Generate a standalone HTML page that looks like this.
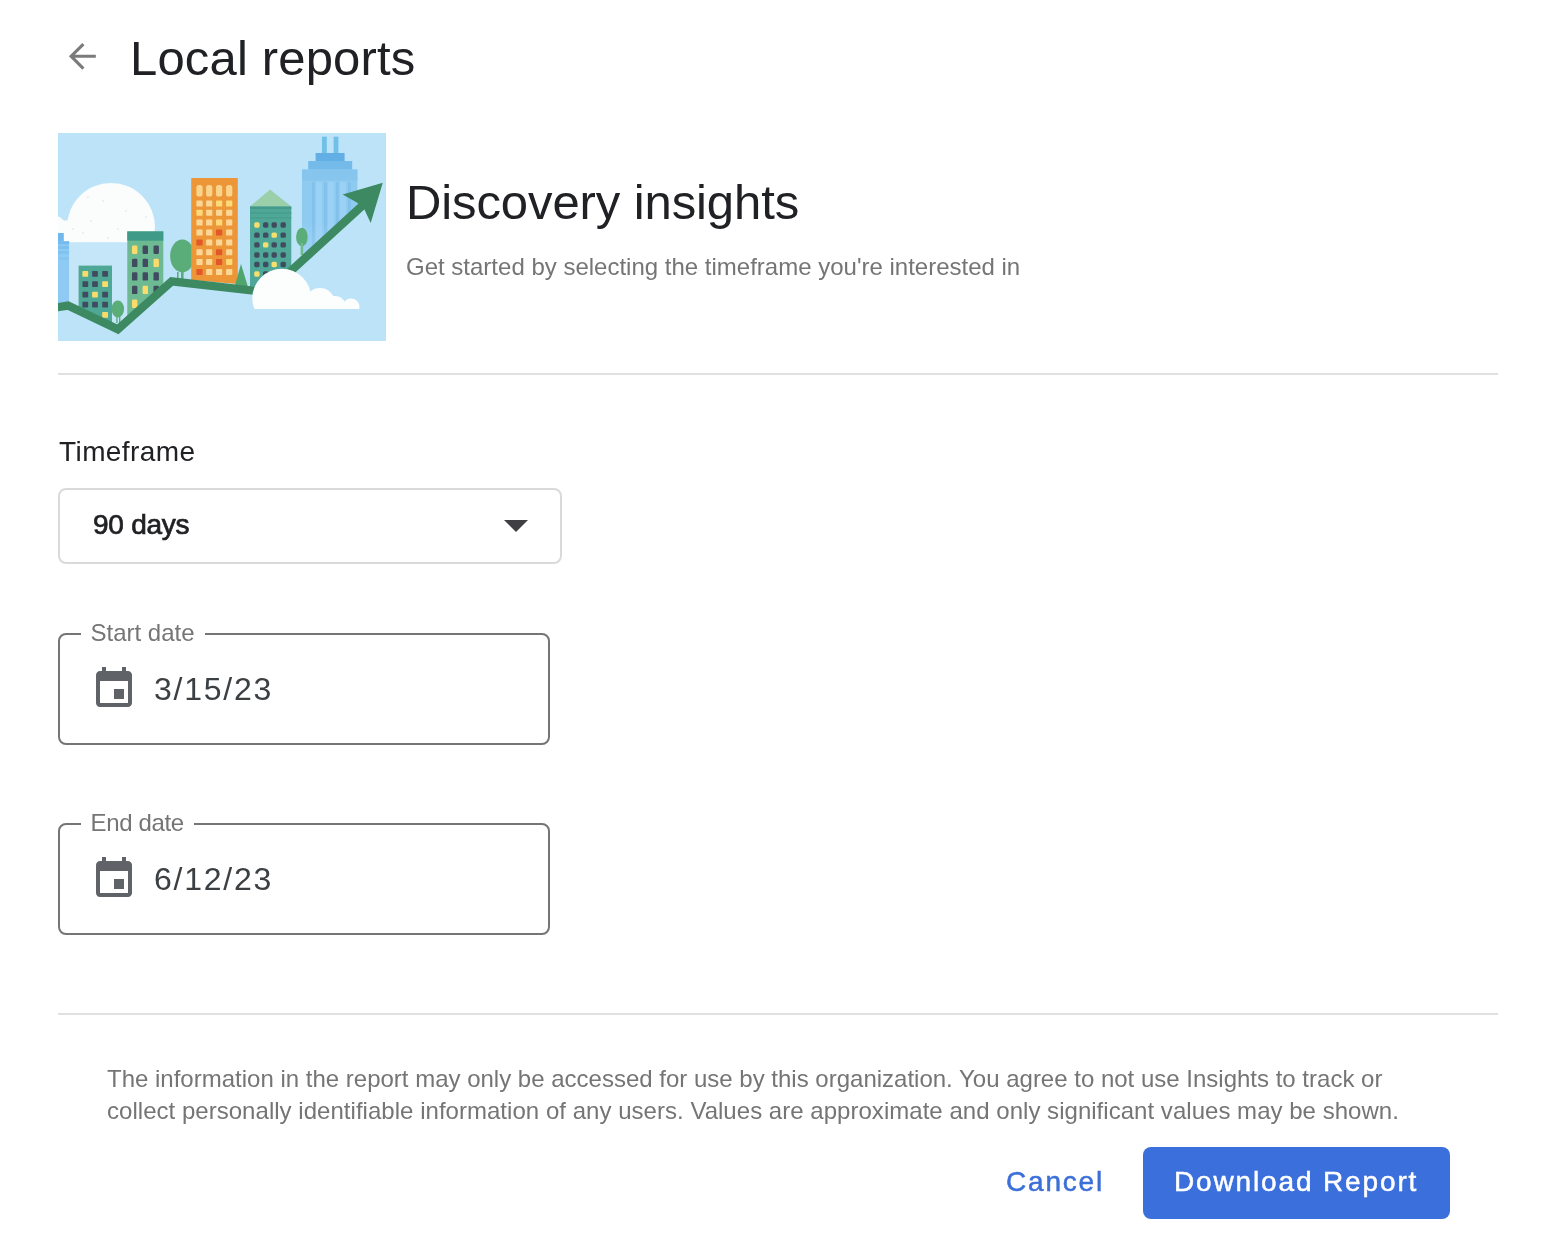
<!DOCTYPE html>
<html lang="en">
<head>
<meta charset="utf-8">
<title>Local reports</title>
<style>
*{box-sizing:border-box;margin:0;padding:0}
html,body{width:1550px;height:1256px;background:#fff;overflow:hidden}
body{position:relative;font-family:"Liberation Sans",sans-serif;color:#202124}
.abs{position:absolute;white-space:nowrap;line-height:1;will-change:transform}
#back{left:61.8px;top:35.6px;width:40.6px;height:40.6px}
#title{left:130px;top:34.4px;font-size:49px;letter-spacing:0.17px;color:#202124}
#hero{left:58px;top:133px;width:328px;height:208px}
#h2{left:406px;top:178.2px;font-size:49px;letter-spacing:-0.1px;color:#202124}
#sub{left:406px;top:255px;font-size:24px;color:#757575}
.hr{position:absolute;left:58px;width:1440px;height:2px;background:#e0e0e0}
#hr1{top:373px}
#hr2{top:1013px}
#tf{left:58.5px;top:438px;font-size:28px;letter-spacing:0.42px;color:#202124}
#sel{left:58px;top:488px;width:504px;height:76px;border:2px solid #dadada;border-radius:8px}
#selt{left:92.8px;top:511px;font-size:28px;letter-spacing:-0.25px;color:#202124;-webkit-text-stroke:0.7px #202124}
#caret{left:504px;top:520px;width:0;height:0;border-left:12px solid transparent;border-right:12px solid transparent;border-top:12px solid #404044}
.box{position:absolute;left:58px;width:492px;height:112px;border:2px solid #757575;border-radius:8px}
#b1{top:633px}
#b2{top:823px}
.lbl{background:#fff;padding:0 10px 0 9.5px;font-size:24px;color:#757575}
#l1{left:81px;top:621px}
#l2{left:81px;top:811px;letter-spacing:-0.35px}
.cal{position:absolute;left:90px;width:48px;height:48px}
#c1{top:665px}
#c2{top:855px}
.dt{font-size:32px;color:#3c4043;left:154px;letter-spacing:1.75px}
#d1{top:673px}
#d2{top:863px}
.note{left:107px;font-size:24px;color:#757575}
#n1{top:1067px}
#n2{top:1099px;letter-spacing:0.03px}
#cancel{left:1006px;top:1168px;font-size:28px;letter-spacing:1.8px;color:#3b6fd8;-webkit-text-stroke:0.5px #3b6fd8}
#btn{left:1143px;top:1147px;width:307px;height:72px;background:#3b6fdc;border-radius:8px}
#btnt{left:1174px;top:1168px;font-size:28px;letter-spacing:1.86px;color:#fff;-webkit-text-stroke:0.5px #fff}
</style>
</head>
<body>
<svg id="back" class="abs" viewBox="0 0 24 24"><path fill="#7b7b7b" d="M20 11.1H7.6l5.7-5.7L12 4.1 4.1 12 12 19.9l1.3-1.3-5.7-5.7H20z"/></svg>
<div id="title" class="abs">Local reports</div>
<svg id="hero" class="abs" viewBox="0 0 328 208">
<defs><linearGradient id="tf" x1="0" y1="0" x2="0" y2="1"><stop offset="0" stop-color="#bde3f8" stop-opacity="0"/><stop offset="1" stop-color="#bde3f8" stop-opacity="0.75"/></linearGradient><clipPath id="cc"><rect x="0" y="40" width="120" height="69.5"/></clipPath><clipPath id="hc"><rect width="328" height="208"/></clipPath><filter id="hb" x="-2%" y="-2%" width="104%" height="104%"><feGaussianBlur stdDeviation="0.75"/></filter></defs>
<rect width="328" height="208" fill="#bde3f8"/>
<g clip-path="url(#hc)"><g filter="url(#hb)">
<rect x="264" y="3.7" width="4.8" height="18" fill="#6fc0e8"/><rect x="275.6" y="3.7" width="4.8" height="18" fill="#6fc0e8"/>
<rect x="257.6" y="20" width="29" height="10" fill="#62afe6"/>
<rect x="250.2" y="28" width="44" height="10" fill="#74bbea"/>
<rect x="244" y="36.5" width="55.4" height="120" fill="#8fcbf1"/>
<rect x="244" y="36.5" width="55.4" height="11" fill="#86c6ee"/>
<rect x="254" y="49" width="2.6" height="100" fill="#82c1ec"/>
<rect x="266" y="49" width="2.6" height="100" fill="#82c1ec"/>
<rect x="278" y="49" width="2.6" height="100" fill="#82c1ec"/>
<rect x="290" y="49" width="2.6" height="100" fill="#82c1ec"/>
<rect x="258" y="49" width="6" height="100" fill="#9bd1f4"/>
<rect x="270" y="49" width="6" height="100" fill="#9bd1f4"/>
<rect x="282" y="49" width="6" height="100" fill="#9bd1f4"/>
<rect x="244" y="90" width="55.4" height="70" fill="url(#tf)"/>
<g clip-path="url(#cc)"><circle cx="-8" cy="100" r="18.5" fill="#fafdfc"/><circle cx="53" cy="94" r="44" fill="#fafdfc"/><rect x="-1" y="87.5" width="16" height="23" fill="#fafdfc"/>
<circle cx="30" cy="64" r="1.1" fill="#e8eeec"/>
<circle cx="45" cy="68" r="1.1" fill="#e8eeec"/>
<circle cx="33" cy="88" r="1.1" fill="#e8eeec"/>
<circle cx="68" cy="78" r="1.1" fill="#e8eeec"/>
<circle cx="88" cy="84" r="1.1" fill="#e8eeec"/>
<circle cx="60" cy="96" r="1.1" fill="#e8eeec"/>
<circle cx="25" cy="100" r="1.1" fill="#e8eeec"/>
<circle cx="75" cy="102" r="1.1" fill="#e8eeec"/>
<circle cx="50" cy="105" r="1.1" fill="#e8eeec"/>
<circle cx="15" cy="96" r="1.1" fill="#e8eeec"/>
</g>
<rect x="0" y="100" width="5.8" height="10" fill="#6fb8ed"/>
<rect x="0" y="108.3" width="11.2" height="85" fill="#8ecaf3"/>
<rect x="0" y="108.3" width="11.2" height="3" fill="#74bbee"/><rect x="0" y="113" width="11.2" height="3" fill="#7dc0f0"/><rect x="0" y="118" width="11.2" height="3" fill="#80c2f1"/><rect x="0" y="124" width="11.2" height="3" fill="#86c6f2"/>
<rect x="11.2" y="109.5" width="58.1" height="80" fill="#c5e6f8"/>
<rect x="20.6" y="132.6" width="33.4" height="60" fill="#4fa896"/>
<rect x="24.4" y="137.9" width="5.8" height="5.8" rx="0.8" fill="#fbdc6a"/>
<rect x="34.1" y="137.9" width="5.8" height="5.8" rx="0.8" fill="#3f4b60"/>
<rect x="44.2" y="137.9" width="5.8" height="5.8" rx="0.8" fill="#3f4b60"/>
<rect x="24.4" y="148.2" width="5.8" height="5.8" rx="0.8" fill="#3f4b60"/>
<rect x="34.1" y="148.2" width="5.8" height="5.8" rx="0.8" fill="#3f4b60"/>
<rect x="44.2" y="148.2" width="5.8" height="5.8" rx="0.8" fill="#fbdc6a"/>
<rect x="24.4" y="158.8" width="5.8" height="5.8" rx="0.8" fill="#3f4b60"/>
<rect x="34.1" y="158.8" width="5.8" height="5.8" rx="0.8" fill="#fbdc6a"/>
<rect x="44.2" y="158.8" width="5.8" height="5.8" rx="0.8" fill="#3f4b60"/>
<rect x="24.4" y="168.8" width="5.8" height="5.8" rx="0.8" fill="#3f4b60"/>
<rect x="34.1" y="168.8" width="5.8" height="5.8" rx="0.8" fill="#3f4b60"/>
<rect x="44.2" y="168.8" width="5.8" height="5.8" rx="0.8" fill="#3f4b60"/>
<rect x="44.2" y="178.9" width="5.8" height="5.8" rx="0.8" fill="#fbdc6a"/>
<rect x="69.3" y="98.4" width="36" height="90" fill="#6dba92"/>
<rect x="69.3" y="98.4" width="36" height="9.3" fill="#3f9a88"/>
<rect x="74.0" y="112.5" width="5.4" height="8.4" rx="1.2" fill="#fbdc6a"/>
<rect x="84.6" y="112.5" width="5.4" height="8.4" rx="1.2" fill="#3f4b60"/>
<rect x="95.5" y="112.5" width="5.4" height="8.4" rx="1.2" fill="#3f4b60"/>
<rect x="74.0" y="125.7" width="5.4" height="8.4" rx="1.2" fill="#3f4b60"/>
<rect x="84.6" y="125.7" width="5.4" height="8.4" rx="1.2" fill="#3f4b60"/>
<rect x="95.5" y="125.7" width="5.4" height="8.4" rx="1.2" fill="#fbdc6a"/>
<rect x="74.0" y="139.2" width="5.4" height="8.4" rx="1.2" fill="#3f4b60"/>
<rect x="84.6" y="139.2" width="5.4" height="8.4" rx="1.2" fill="#3f4b60"/>
<rect x="95.5" y="139.2" width="5.4" height="8.4" rx="1.2" fill="#3f4b60"/>
<rect x="74.0" y="152.7" width="5.4" height="8.4" rx="1.2" fill="#3f4b60"/>
<rect x="84.6" y="152.7" width="5.4" height="8.4" rx="1.2" fill="#fbdc6a"/>
<rect x="95.5" y="152.7" width="5.4" height="8.4" rx="1.2" fill="#3f4b60"/>
<rect x="74.0" y="166.5" width="5.4" height="8.4" rx="1.2" fill="#fbdc6a"/>
<ellipse cx="59.8" cy="176" rx="6.3" ry="8.5" fill="#5aad78"/><rect x="58.2" y="182" width="1.4" height="8" fill="#5aad78"/><rect x="61" y="182" width="1.4" height="8" fill="#5aad78"/>
<ellipse cx="124.3" cy="123" rx="12.2" ry="16.4" fill="#5aad78"/><rect x="123" y="135" width="2.6" height="12" fill="#5aad78"/><rect x="119" y="139" width="1.6" height="8" fill="#5aad78"/>
<ellipse cx="243.9" cy="103.9" rx="5.8" ry="9.2" fill="#5aad78"/><rect x="242.6" y="110" width="2.6" height="12" fill="#6fbb8e"/>
<polygon points="133.2,45 179.8,45 179.8,151 133.2,147" fill="#ec9638"/>
<rect x="138.4" y="52" width="6.2" height="11.6" rx="2.6" fill="#fbd48c"/>
<rect x="148.1" y="52" width="6.2" height="11.6" rx="2.6" fill="#fbd48c"/>
<rect x="158.0" y="52" width="6.2" height="11.6" rx="2.6" fill="#fbd48c"/>
<rect x="168.1" y="52" width="6.2" height="11.6" rx="2.6" fill="#fbd48c"/>
<rect x="138.4" y="67.6" width="6.2" height="6" rx="0.6" fill="#fbd695"/>
<rect x="148.1" y="67.6" width="6.2" height="6" rx="0.6" fill="#fbd695"/>
<rect x="158.0" y="67.6" width="6.2" height="6" rx="0.6" fill="#fdd978"/>
<rect x="168.1" y="67.6" width="6.2" height="6" rx="0.6" fill="#fdd978"/>
<rect x="138.4" y="76.7" width="6.2" height="6" rx="0.6" fill="#fdd978"/>
<rect x="148.1" y="76.7" width="6.2" height="6" rx="0.6" fill="#fbd695"/>
<rect x="158.0" y="76.7" width="6.2" height="6" rx="0.6" fill="#fbd695"/>
<rect x="168.1" y="76.7" width="6.2" height="6" rx="0.6" fill="#fbd695"/>
<rect x="138.4" y="86.6" width="6.2" height="6" rx="0.6" fill="#fbd695"/>
<rect x="148.1" y="86.6" width="6.2" height="6" rx="0.6" fill="#fbd695"/>
<rect x="158.0" y="86.6" width="6.2" height="6" rx="0.6" fill="#fdd978"/>
<rect x="168.1" y="86.6" width="6.2" height="6" rx="0.6" fill="#fbd695"/>
<rect x="138.4" y="96.6" width="6.2" height="6" rx="0.6" fill="#fbd695"/>
<rect x="148.1" y="96.6" width="6.2" height="6" rx="0.6" fill="#fbd695"/>
<rect x="158.0" y="96.6" width="6.2" height="6" rx="0.6" fill="#e2582b"/>
<rect x="168.1" y="96.6" width="6.2" height="6" rx="0.6" fill="#fbd695"/>
<rect x="138.4" y="106.5" width="6.2" height="6" rx="0.6" fill="#e2582b"/>
<rect x="148.1" y="106.5" width="6.2" height="6" rx="0.6" fill="#fbd695"/>
<rect x="158.0" y="106.5" width="6.2" height="6" rx="0.6" fill="#fbd695"/>
<rect x="168.1" y="106.5" width="6.2" height="6" rx="0.6" fill="#fbd695"/>
<rect x="138.4" y="116.3" width="6.2" height="6" rx="0.6" fill="#fbd695"/>
<rect x="148.1" y="116.3" width="6.2" height="6" rx="0.6" fill="#fbd695"/>
<rect x="158.0" y="116.3" width="6.2" height="6" rx="0.6" fill="#e2582b"/>
<rect x="168.1" y="116.3" width="6.2" height="6" rx="0.6" fill="#fbd695"/>
<rect x="138.4" y="125.9" width="6.2" height="6" rx="0.6" fill="#fbd695"/>
<rect x="148.1" y="125.9" width="6.2" height="6" rx="0.6" fill="#fbd695"/>
<rect x="158.0" y="125.9" width="6.2" height="6" rx="0.6" fill="#e2582b"/>
<rect x="168.1" y="125.9" width="6.2" height="6" rx="0.6" fill="#fdd978"/>
<rect x="138.4" y="136.0" width="6.2" height="6" rx="0.6" fill="#e2582b"/>
<rect x="148.1" y="136.0" width="6.2" height="6" rx="0.6" fill="#fbd695"/>
<rect x="158.0" y="136.0" width="6.2" height="6" rx="0.6" fill="#fbd695"/>
<rect x="168.1" y="136.0" width="6.2" height="6" rx="0.6" fill="#fbd695"/>
<polygon points="183,131 190,154 176.5,154" fill="#4fa56c"/>
<polygon points="192,73.5 212.1,56.6 233.3,73.5" fill="#9bcfa9"/>
<rect x="192" y="73.5" width="41.3" height="90" fill="#4fa797"/>
<rect x="192" y="73.5" width="41.3" height="2.4" fill="#46998a"/><rect x="192" y="79" width="41.3" height="2" fill="#48a08e"/><rect x="192" y="84" width="41.3" height="1.6" fill="#48a08e"/>
<rect x="196.2" y="89.3" width="5.4" height="5.4" rx="1.6" fill="#f6df6e"/>
<rect x="205.0" y="89.3" width="5.4" height="5.4" rx="1.6" fill="#3f4b60"/>
<rect x="213.5" y="89.3" width="5.4" height="5.4" rx="1.6" fill="#3f4b60"/>
<rect x="222.5" y="89.3" width="5.4" height="5.4" rx="1.6" fill="#3f4b60"/>
<rect x="196.2" y="99.4" width="5.4" height="5.4" rx="1.6" fill="#3f4b60"/>
<rect x="205.0" y="99.4" width="5.4" height="5.4" rx="1.6" fill="#3f4b60"/>
<rect x="213.5" y="99.4" width="5.4" height="5.4" rx="1.6" fill="#f6df6e"/>
<rect x="222.5" y="99.4" width="5.4" height="5.4" rx="1.6" fill="#3f4b60"/>
<rect x="196.2" y="109.2" width="5.4" height="5.4" rx="1.6" fill="#3f4b60"/>
<rect x="205.0" y="109.2" width="5.4" height="5.4" rx="1.6" fill="#f6df6e"/>
<rect x="213.5" y="109.2" width="5.4" height="5.4" rx="1.6" fill="#3f4b60"/>
<rect x="222.5" y="109.2" width="5.4" height="5.4" rx="1.6" fill="#3f4b60"/>
<rect x="196.2" y="119.3" width="5.4" height="5.4" rx="1.6" fill="#3f4b60"/>
<rect x="205.0" y="119.3" width="5.4" height="5.4" rx="1.6" fill="#3f4b60"/>
<rect x="213.5" y="119.3" width="5.4" height="5.4" rx="1.6" fill="#3f4b60"/>
<rect x="222.5" y="119.3" width="5.4" height="5.4" rx="1.6" fill="#3f4b60"/>
<rect x="196.2" y="128.8" width="5.4" height="5.4" rx="1.6" fill="#3f4b60"/>
<rect x="205.0" y="128.8" width="5.4" height="5.4" rx="1.6" fill="#3f4b60"/>
<rect x="213.5" y="128.8" width="5.4" height="5.4" rx="1.6" fill="#f6df6e"/>
<rect x="222.5" y="128.8" width="5.4" height="5.4" rx="1.6" fill="#3f4b60"/>
<rect x="196.2" y="138.3" width="5.4" height="5.4" rx="1.6" fill="#f6df6e"/>
<rect x="205.0" y="138.3" width="5.4" height="5.4" rx="1.6" fill="#3f4b60"/>
<rect x="213.5" y="138.3" width="5.4" height="5.4" rx="1.6" fill="#3f4b60"/>
<rect x="222.5" y="138.3" width="5.4" height="5.4" rx="1.6" fill="#3f4b60"/>
<polygon points="-4,174.8 10,172.6 59.8,196.3 113.7,148.4 209.6,159.2 303,73.8 330,50 330,210 -4,210" fill="#bde3f8"/>
<polyline points="-4,174.8 10,172.6 59.8,196.3 113.7,148.4 209.6,159.2 306,71.1" fill="none" stroke="#3c8a62" stroke-width="8.2" stroke-linejoin="miter"/>
<polygon points="324.8,49.7 284.6,61.4 298.4,69.3 306.3,76.2 312.7,90" fill="#3c8a62"/>
<circle cx="223.8" cy="165.3" r="29.5" fill="#fbfefd"/><circle cx="262" cy="170" r="15" fill="#fbfefd"/><circle cx="277" cy="174" r="11" fill="#fbfefd"/><circle cx="293" cy="174" r="8.5" fill="#fbfefd"/>
<rect x="190" y="176" width="120" height="30" fill="#bde3f8"/>
</g></g></svg>
<div id="h2" class="abs">Discovery insights</div>
<div id="sub" class="abs">Get started by selecting the timeframe you're interested in</div>
<div id="hr1" class="hr"></div>
<div id="tf" class="abs">Timeframe</div>
<div id="sel" class="abs"></div>
<div id="selt" class="abs">90 days</div>
<div id="caret" class="abs"></div>
<div id="b1" class="box"></div>
<div id="l1" class="abs lbl">Start date</div>
<svg id="c1" class="cal" viewBox="0 0 24 24"><path fill="#5f6368" d="M17 12h-5v5h5v-5zM16 1v2H8V1H6v2H5c-1.11 0-1.99.9-1.99 2L3 19c0 1.1.89 2 2 2h14c1.1 0 2-.9 2-2V5c0-1.1-.9-2-2-2h-1V1h-2zm3 18H5V8h14v11z"/></svg>
<div id="d1" class="abs dt">3/15/23</div>
<div id="b2" class="box"></div>
<div id="l2" class="abs lbl">End date</div>
<svg id="c2" class="cal" viewBox="0 0 24 24"><path fill="#5f6368" d="M17 12h-5v5h5v-5zM16 1v2H8V1H6v2H5c-1.11 0-1.99.9-1.99 2L3 19c0 1.1.89 2 2 2h14c1.1 0 2-.9 2-2V5c0-1.1-.9-2-2-2h-1V1h-2zm3 18H5V8h14v11z"/></svg>
<div id="d2" class="abs dt">6/12/23</div>
<div id="hr2" class="hr"></div>
<div id="n1" class="abs note">The information in the report may only be accessed for use by this organization. You agree to not use Insights to track or</div>
<div id="n2" class="abs note">collect personally identifiable information of any users. Values are approximate and only significant values may be shown.</div>
<div id="cancel" class="abs">Cancel</div>
<div id="btn" class="abs"></div>
<div id="btnt" class="abs">Download Report</div>
</body>
</html>
